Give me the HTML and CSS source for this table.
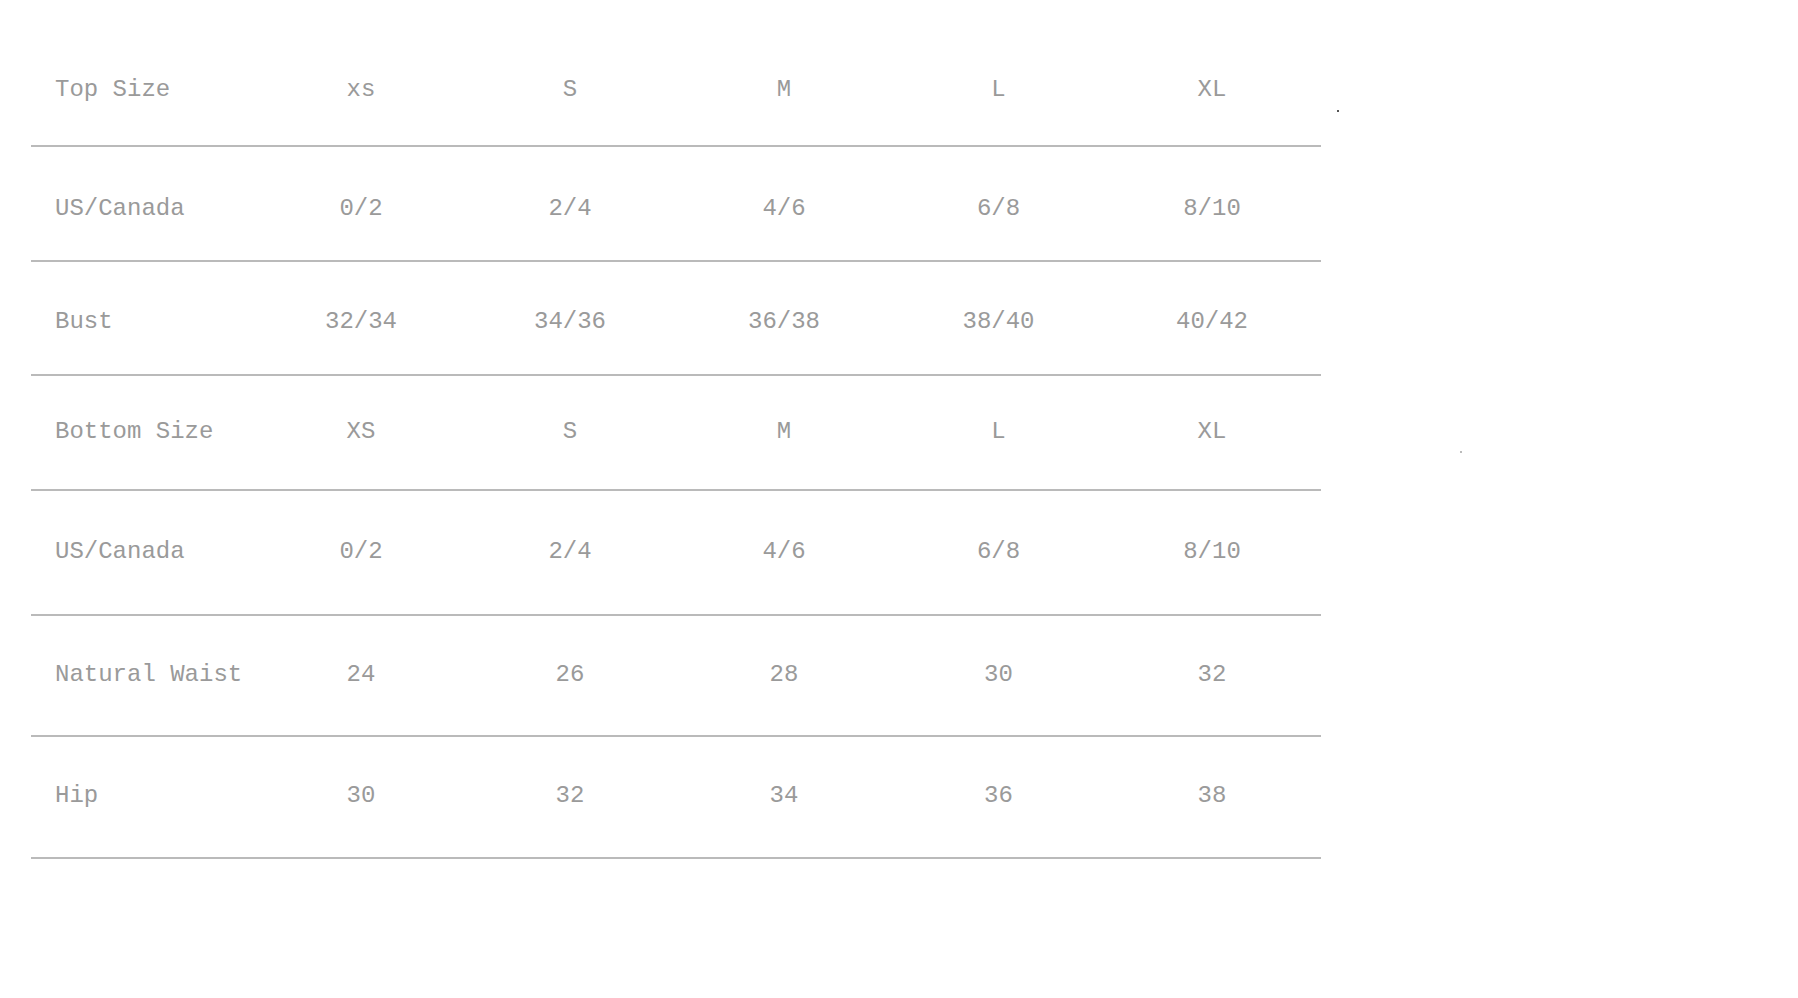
FILE: index.html
```html
<!DOCTYPE html>
<html lang="en">
<head>
<meta charset="utf-8">
<title>Size Chart</title>
<link rel="stylesheet" href="styles.css">
</head>
<body>
<div class="page">
  <div class="chart">
    <div class="row r-head">
      <div class="label">Top Size</div>
      <div class="cell">xs</div><div class="cell">S</div><div class="cell">M</div><div class="cell">L</div><div class="cell">XL</div>
    </div>
    <div class="row r1">
      <div class="label">US/Canada</div>
      <div class="cell">0/2</div><div class="cell">2/4</div><div class="cell">4/6</div><div class="cell">6/8</div><div class="cell">8/10</div>
    </div>
    <div class="row r2">
      <div class="label">Bust</div>
      <div class="cell">32/34</div><div class="cell">34/36</div><div class="cell">36/38</div><div class="cell">38/40</div><div class="cell">40/42</div>
    </div>
    <div class="row r3">
      <div class="label">Bottom Size</div>
      <div class="cell">XS</div><div class="cell">S</div><div class="cell">M</div><div class="cell">L</div><div class="cell">XL</div>
    </div>
    <div class="row r4">
      <div class="label">US/Canada</div>
      <div class="cell">0/2</div><div class="cell">2/4</div><div class="cell">4/6</div><div class="cell">6/8</div><div class="cell">8/10</div>
    </div>
    <div class="row r5">
      <div class="label">Natural Waist</div>
      <div class="cell">24</div><div class="cell">26</div><div class="cell">28</div><div class="cell">30</div><div class="cell">32</div>
    </div>
    <div class="row r6">
      <div class="label">Hip</div>
      <div class="cell">30</div><div class="cell">32</div><div class="cell">34</div><div class="cell">36</div><div class="cell">38</div>
    </div>
  </div>
  <span class="speck s1"></span>
  <span class="speck s2"></span>
</div>
</body>
</html>
```
FILE: styles.css
```css
html, body {
  margin: 0;
  padding: 0;
  background: #ffffff;
}

.page {
  position: relative;
  width: 1798px;
  height: 998px;
  padding: 30px 0 0 31px;
  box-sizing: border-box;
  font-family: "Liberation Mono", "Courier New", monospace;
  font-size: 24px;
  color: #9a9a9a;
}

.chart {
  width: 1290px;
}

.row {
  display: grid;
  grid-template-columns: 227px 206px 212px 216px 213px 214px 1fr;
  align-items: center;
  border-bottom: 2px solid #bababa;
  box-sizing: border-box;
}

.label {
  padding-left: 24px;
  white-space: nowrap;
}

.cell {
  text-align: center;
  white-space: nowrap;
}

.r-head { height: 117px; padding-top: 4px; }
.r1 { height: 115px; padding-top: 9px; }
.r2 { height: 114px; padding-top: 7px; }
.r3 { height: 115px; padding-bottom: 2px; }
.r4 { height: 125px; padding-bottom: 2px; }
.r5 { height: 121px; padding-bottom: 2px; }
.r6 { height: 122px; padding-bottom: 4px; }

.speck {
  position: absolute;
  width: 2px;
  height: 2px;
  background: #555;
}

.s1 { left: 1337px; top: 110px; }
.s2 { left: 1460px; top: 451px; background: #bbb; }
```
